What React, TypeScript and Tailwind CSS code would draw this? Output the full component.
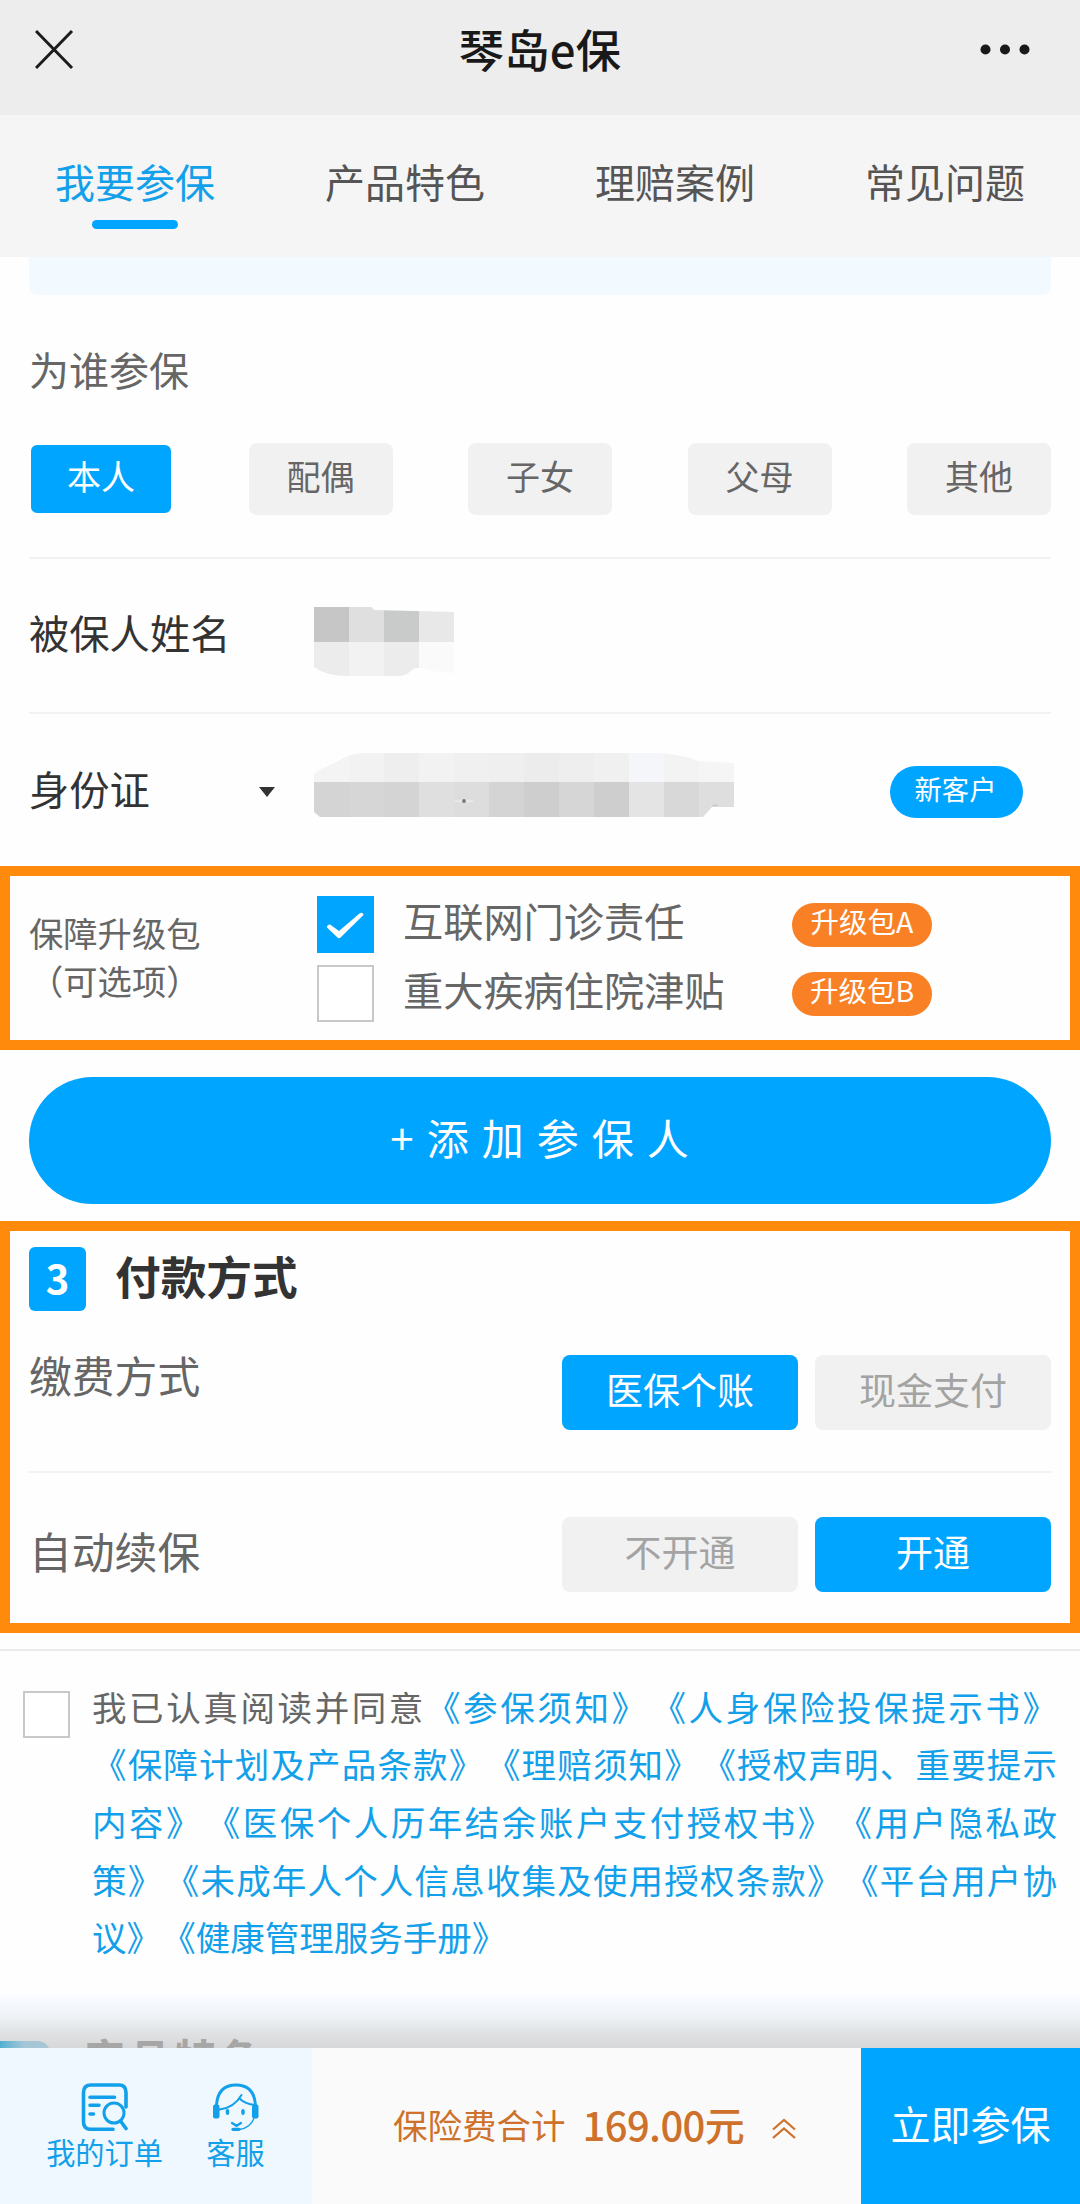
import React from "react";

const FONT = "font-['Noto_Sans_CJK_SC',sans-serif]";

const tabs = ["我要参保", "产品特色", "理赔案例", "常见问题"];
const people = ["本人", "配偶", "子女", "父母", "其他"];

function CheckBox({ checked = false, className = "" }: { checked?: boolean; className?: string }) {
  return (
    <div
      className={
        (checked ? "bg-[#00a5ff] " : "border-[2.5px] border-[#c8c8c8] bg-white ") +
        "flex shrink-0 items-center justify-center " +
        className
      }
    >
      {checked && (
        <svg viewBox="0 0 57 57" className="h-full w-full" fill="#fff">
          <path d="M10 31.500Q10 28.500 13 28.500L22 35L42.500 17.500Q46 15.500 46.500 19L23.500 41.500Q22 43 20.500 41.500Z" />
        </svg>
      )}
    </div>
  );
}

function NameMosaic() {
  return (
    <svg width="140" height="70" viewBox="0 0 140 70">
      <defs>
        <clipPath id="nameClip">
          <path d="M0 0H57L60 3L140 5V66L118 64Q103 58 98 63Q92 69 84 69H34Q12 69 0 60Z" />
        </clipPath>
      </defs>
      <g clipPath="url(#nameClip)">
        {["#c6c6c6", "#dfdfdf", "#c9cbca", "#e8e8e8"].map((c, i) => (
          <rect key={c} x={i * 35} y="0" width="35.5" height="35" fill={c} />
        ))}
        {["#ececec", "#f2f2f2", "#ececec", "#fafafa"].map((c, i) => (
          <rect key={i} x={i * 35} y="35" width="35.5" height="35" fill={c} />
        ))}
      </g>
    </svg>
  );
}

function IdMosaic() {
  const top = ["#f4f4f4", "#f2f2f2", "#eeeeee", "#f2f2f2", "#f0f0f0", "#efefef", "#ececec", "#eeeeee", "#f0f0f0", "#f4f6f9", "#f3f3f3", "#f5f5f5"];
  const low = ["#d4d4d4", "#d6d6d6", "#d4d4d4", "#dfdfdf", "#dddddd", "#d4d4d4", "#cecece", "#d6d6d6", "#cecece", "#e4e4e4", "#d8d8d8", "#dedede"];
  return (
    <svg width="420" height="66" viewBox="0 0 420 66">
      <defs>
        <clipPath id="idClip">
          <path d="M0 22L5 18Q14 14 22 10Q36 1 50 1H345Q367 2 384 9L420 11V55H398L389 65H6L0 60Z" />
        </clipPath>
      </defs>
      <g clipPath="url(#idClip)">
        {top.map((c, i) => (
          <rect key={i} x={i * 35} y="0" width="35.5" height="30" fill={c} />
        ))}
        {low.map((c, i) => (
          <rect key={i} x={i * 35} y="30" width="35.5" height="36" fill={c} />
        ))}
      </g>
      <ellipse cx="150" cy="49" rx="10" ry="1.500" fill="#e8e8e8" />
      <circle cx="150" cy="49" r="1.900" fill="#777" />
      <ellipse cx="401" cy="53.500" rx="3" ry="0.800" fill="#c4c4c4" />
    </svg>
  );
}

function OrderIcon() {
  return (
    <svg width="48" height="48" viewBox="0 0 48 48" fill="none" stroke="#12a0ea" strokeWidth="3.6" strokeLinecap="round">
      <path d="M32 46.300H10Q2.500 46.300 2.500 39V9.500Q2.500 2 10 2H38Q45 2 45 9.500V24" />
      <path d="M9 14.300H33.500M9 22.300H18M9 31H12.500" />
      <circle cx="33" cy="30" r="10" strokeWidth="3" />
      <path d="M39.500 38L45 45.500" />
    </svg>
  );
}

function ServiceIcon() {
  return (
    <svg width="48" height="48" viewBox="0 0 48 48" fill="none" stroke="#12a0ea" strokeLinecap="round">
      <path d="M4.500 22Q6 2 24 2Q42 2 43.500 22" strokeWidth="3" />
      <path d="M7.500 26.500Q22 25 29.500 12" strokeWidth="2" />
      <path d="M27.500 15.500Q33 21 43 22" strokeWidth="2" />
      <path d="M42.500 34Q39 45 27 46.500" strokeWidth="1.300" />
      <rect x="1" y="21.500" width="6.500" height="14" rx="2" fill="#12a0ea" stroke="none" />
      <rect x="40" y="21.500" width="6.500" height="14" rx="2" fill="#12a0ea" stroke="none" />
      <ellipse cx="15.500" cy="29" rx="1.800" ry="3" fill="#12a0ea" stroke="none" />
      <ellipse cx="31" cy="29" rx="1.800" ry="3" fill="#12a0ea" stroke="none" />
      <path d="M20 40L24.500 42.800L29 40" strokeWidth="2.300" />
      <path d="M21 46.300H27" strokeWidth="3.200" />
    </svg>
  );
}

function Pill({ text }: { text: string }) {
  return (
    <span className="flex h-11 w-[140px] items-center justify-center rounded-full bg-[#f98025] pb-[7px] text-[28.5px] leading-none text-white">
      {text}
    </span>
  );
}

function Choice({ text, on }: { text: string; on: boolean }) {
  return (
    <button
      className={
        (on ? "bg-[#00a5ff] text-white " : "bg-[#f1f1f1] text-[#a3a3a3] ") +
        "h-[75px] w-[236px] rounded-lg pb-1.5 text-[37px] leading-none"
      }
    >
      {text}
    </button>
  );
}

const agreementLines = [
  "《保障计划及产品条款》 《理赔须知》 《授权声明、重要提示",
  "内容》 《医保个人历年结余账户支付授权书》 《用户隐私政",
  "策》 《未成年人个人信息收集及使用授权条款》 《平台用户协",
];

export default function App() {
  return (
    <div className={"flex h-[2204px] w-[1080px] flex-col overflow-hidden bg-[#fefefe] text-[#666] " + FONT}>
      <header className="flex h-[115px] shrink-0 items-start justify-between bg-[#ededed] px-[35px] pt-5">
        <svg width="80" height="60" viewBox="0 0 80 60" fill="none" stroke="#1c1c1c" strokeWidth="3">
          <path d="M1 11L37 48M37 11L1 48" />
        </svg>
        <h1 className="-mt-[2px] text-[45.5px] font-medium leading-[60px] text-[#191919]">琴岛e保</h1>
        <svg width="80" height="60" viewBox="0 0 80 60" fill="#191919">
          <circle cx="20.500" cy="29.500" r="5" />
          <circle cx="40" cy="29.500" r="5" />
          <circle cx="59.500" cy="29.500" r="5" />
        </svg>
      </header>

      <nav className="grid h-[142px] shrink-0 grid-cols-4 bg-[#f5f5f5]">
        {tabs.map((t, i) => (
          <div key={t} className="flex flex-col items-center pt-9">
            <span className={"text-[40px] leading-[60px] " + (i === 0 ? "text-[#12a0ea]" : "text-[#555]")}>{t}</span>
            {i === 0 && <span className="mt-[9px] h-[9px] w-[86px] rounded-full bg-[#00a5ff]" />}
          </div>
        ))}
      </nav>

      <div className="mx-[29px] h-[38px] shrink-0 rounded-b-lg bg-[#f3faff]" />

      <section className="mx-[29px] flex h-[264px] shrink-0 flex-col border-b-2 border-[#f2f2f2] pt-11">
        <h2 className="text-[40px] leading-[60px]">为谁参保</h2>
        <div className="mt-11 flex justify-between">
          {people.map((p, i) => (
            <button
              key={p}
              className={
                "h-[72px] w-[144px] rounded-lg pb-1.5 text-[34px] leading-none " +
                (i === 0 ? "border-[2.5px] border-[#fefefe] bg-[#00a5ff] text-white" : "bg-[#f1f1f1]")
              }
            >
              {p}
            </button>
          ))}
        </div>
      </section>

      <section className="mx-[29px] flex h-[155px] shrink-0 items-start border-b-2 border-[#f2f2f2]">
        <span className="w-[285px] pt-[43px] text-[40.3px] leading-[60px] text-[#333]">被保人姓名</span>
        <div className="pt-12">
          <NameMosaic />
        </div>
      </section>

      <section className="mx-[29px] flex h-[152px] shrink-0 items-start">
        <span className="w-[230px] pt-11 text-[40.3px] leading-[60px] text-[#333]">身份证</span>
        <svg width="55" height="10" viewBox="0 0 55 10" className="mt-[73px]" fill="#333">
          <path d="M0 0H16L8 10Z" />
        </svg>
        <div className="pt-[38px]">
          <IdMosaic />
        </div>
        <span className="ml-auto mr-7 mt-[52px] flex h-[52px] w-[133px] items-center justify-center rounded-full bg-[#00a5ff] pb-1.5 pr-0.5 text-[27.3px] leading-none text-white">
          新客户
        </span>
      </section>

      <section className="flex h-[184px] shrink-0 items-start border-10 border-[#ff8a0b]">
        <div className="w-[307px] pt-8 pl-[19px] text-[34.3px] leading-[48px]">
          <p>保障升级包</p>
          <p>（可选项）</p>
        </div>
        <div className="flex flex-col gap-3 pt-5">
          <div className="flex h-[57px] items-center">
            <CheckBox checked className="h-[57px] w-[57px]" />
            <span className="w-[418px] pb-2 pl-[29px] text-[40.2px] leading-none">互联网门诊责任</span>
            <Pill text="升级包A" />
          </div>
          <div className="flex h-[57px] items-center">
            <CheckBox className="h-[57px] w-[57px]" />
            <span className="w-[418px] pb-2 pl-[29px] text-[40.2px] leading-none">重大疾病住院津贴</span>
            <Pill text="升级包B" />
          </div>
        </div>
      </section>

      <button className="mx-[29px] mt-[27px] h-[127px] shrink-0 rounded-full bg-[#00a5ff] pb-2 pl-3 text-[42px] leading-none tracking-[13px] text-white">
        +添加参保人
      </button>

      <section className="mt-[17px] h-[412px] shrink-0 border-10 border-[#ff8a0b] px-[19px] pt-4">
        <div className="flex h-16 items-center gap-[29px]">
          <span className="flex h-16 w-[57px] items-center justify-center rounded-md bg-[#00a5ff] pb-1 text-[40px] font-bold leading-none text-white">
            3
          </span>
          <h2 className="pb-1.5 text-[45.7px] font-bold leading-none text-[#333]">付款方式</h2>
        </div>
        <div className="mt-11 flex h-[118px] items-start justify-between border-b-2 border-[#f2f2f2]">
          <span className="-mt-[11px] text-[42.8px] leading-[60px]">缴费方式</span>
          <div className="flex gap-[17px]">
            <Choice text="医保个账" on />
            <Choice text="现金支付" on={false} />
          </div>
        </div>
        <div className="flex items-start justify-between pt-11">
          <span className="mt-[3px] text-[42.8px] leading-[60px]">自动续保</span>
          <div className="flex gap-[17px]">
            <Choice text="不开通" on={false} />
            <Choice text="开通" on />
          </div>
        </div>
      </section>

      <section className="mt-4 flex h-[342px] shrink-0 items-start border-t-2 border-[#ebebeb] pl-[23px]">
        <CheckBox className="mt-10 h-[47px] w-[47px]" />
        <div className="ml-[22px] w-[965px] pt-[26.5px] text-[34.5px] leading-[57.7px] text-[#12a0ea] [word-spacing:-7.5px]">
          <p className="whitespace-nowrap [text-align-last:justify]">
            <span className="text-[#666]">我已认真阅读并同意</span>《参保须知》 《人身保险投保提示书》
          </p>
          {agreementLines.map((l) => (
            <p key={l} className="whitespace-nowrap [text-align-last:justify]">
              {l}
            </p>
          ))}
          <p>议》 《健康管理服务手册》</p>
        </div>
      </section>

      <div className="h-[57px] shrink-0 overflow-hidden bg-[linear-gradient(to_bottom,#fefefe_0%,#f8faff_14%,#eef2f5_45%,#dfe1e3_75%,#d6d7d8_100%)]">
        <div className="flex items-start pt-[44px]">
          <div className="mt-[6px] h-16 w-[50px] rounded-tr-xl bg-linear-to-r from-[#4fb0cf] via-[#a4c6d8] to-[#a9c6d4]" />
          <span className="ml-[33px] mt-[-3px] text-[43px] font-bold leading-[50px] tracking-[2.500px] text-[#a6a6a6]">产品特色</span>
        </div>
      </div>

      <footer className="flex h-[156px] shrink-0">
        <div className="flex w-[312px] bg-[#f0f8ff] pl-[46px] pt-[35px] text-[29.200px] leading-[34px] text-[#12a0ea]">
          <div className="flex w-[117px] flex-col items-center gap-[3px]">
            <OrderIcon />
            <span>我的订单</span>
          </div>
          <div className="ml-[43px] flex w-[59px] flex-col items-center gap-[3px]">
            <ServiceIcon />
            <span>客服</span>
          </div>
        </div>
        <div className="flex w-[549px] items-center bg-[#fafafa] pb-1 pl-[81px] leading-none text-[#cd712b]">
          <span className="text-[34.500px]">保险费合计</span>
          <span className="ml-[17px] text-[40px] font-medium tracking-[-0.600px]">169.00元</span>
          <svg width="24" height="22" viewBox="0 0 24 22" className="ml-7 mt-2.5" fill="none" stroke="#cd712b" strokeWidth="2.200">
            <path d="M1 11.500L12 2L23 11.500M1 20L12 10.500L23 20" />
          </svg>
        </div>
        <button className="w-[219px] bg-[#00a5ff] pb-1.5 text-[40px] leading-none text-white">立即参保</button>
      </footer>
    </div>
  );
}
